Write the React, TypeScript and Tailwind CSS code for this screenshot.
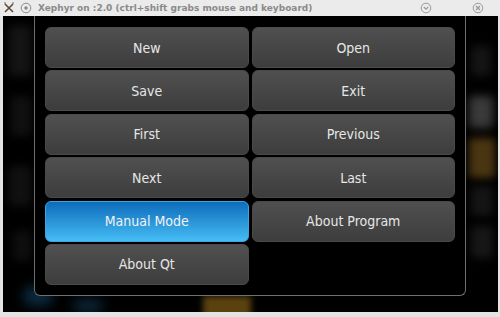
import React from "react";

const buttons = [
  "New",
  "Open",
  "Save",
  "Exit",
  "First",
  "Previous",
  "Next",
  "Last",
  "Manual Mode",
  "About Program",
  "About Qt",
];

function Blob({ c }: { c: string }) {
  return <div className={c} />;
}

export default function App() {
  return (
    <div
      className="w-[500px] h-[317px] bg-[#e4e4e4] flex flex-col overflow-hidden"
      style={{ fontFamily: "'DejaVu Sans Condensed', Roboto, sans-serif" }}
    >
      {/* title bar */}
      <div className="h-[16px] flex items-center bg-[#ebebeb] relative">
        <svg width="12" height="12" viewBox="0 0 12 12" className="ml-[3px]">
          <path d="M2 2 L10 10 M10 2 L2 10" stroke="#5a4a3a" strokeWidth="1.6" />
          <path d="M1 1 L3 1 M9 1 L11 1" stroke="#8a6a4a" strokeWidth="1" />
        </svg>
        <svg width="12" height="12" viewBox="0 0 12 12" className="ml-[5px]">
          <circle cx="6" cy="6" r="4.8" fill="none" stroke="#8c8c8c" strokeWidth="1" />
          <circle cx="6" cy="6" r="1.8" fill="#8c8c8c" />
        </svg>
        <span
          className="ml-[6px] text-[9px] font-bold text-[#8a8a8a] leading-none whitespace-nowrap"
          style={{ fontFamily: "'DejaVu Sans', sans-serif" }}
        >
          Xephyr on :2.0 (ctrl+shift grabs mouse and keyboard)
        </span>
        <div className="flex-1" />
        <svg width="12" height="12" viewBox="0 0 12 12" className="mr-[40px]">
          <circle cx="6" cy="6" r="4.8" fill="none" stroke="#9a9a9a" strokeWidth="1" />
          <path d="M3.8 5 L6 7.2 L8.2 5" fill="none" stroke="#9a9a9a" strokeWidth="1.2" />
        </svg>
        <svg width="12" height="12" viewBox="0 0 12 12" className="mr-[16px]">
          <circle cx="6" cy="6" r="4.8" fill="none" stroke="#9a9a9a" strokeWidth="1" />
          <path d="M4 4 L8 8 M8 4 L4 8" stroke="#9a9a9a" strokeWidth="1.3" />
        </svg>
      </div>

      {/* screen */}
      <div className="h-[296px] ml-[3px] mr-[2px] bg-black relative overflow-hidden">
        {/* blurred background */}
        <Blob c="absolute left-[6px] top-[10px] w-[22px] h-[50px] rounded bg-[#141414] blur-[4px]" />
        <Blob c="absolute left-[8px] top-[80px] w-[20px] h-[40px] rounded bg-[#101010] blur-[4px]" />
        <Blob c="absolute left-[6px] top-[150px] w-[22px] h-[40px] rounded bg-[#101010] blur-[4px]" />
        <Blob c="absolute left-[10px] top-[215px] w-[18px] h-[30px] rounded bg-[#0e0e0e] blur-[4px]" />
        <Blob c="absolute left-[20px] top-[270px] w-[30px] h-[20px] rounded-full bg-[#0b2a3e] blur-[6px]" />
        <Blob c="absolute left-[70px] top-[282px] w-[30px] h-[16px] rounded-full bg-[#0a2233] blur-[6px]" />
        <Blob c="absolute left-[200px] top-[280px] w-[48px] h-[24px] bg-[#5a4210] blur-[3px]" />
        <Blob c="absolute left-[468px] top-[30px] w-[20px] h-[30px] rounded bg-[#141414] blur-[4px]" />
        <Blob c="absolute left-[466px] top-[80px] w-[24px] h-[32px] rounded bg-[#3a3a3a] blur-[5px]" />
        <Blob c="absolute left-[466px] top-[122px] w-[26px] h-[40px] rounded bg-[#4a3512] blur-[4px]" />
        <Blob c="absolute left-[468px] top-[170px] w-[22px] h-[30px] rounded bg-[#141414] blur-[4px]" />
        <Blob c="absolute left-[468px] top-[210px] w-[22px] h-[32px] rounded bg-[#161616] blur-[4px]" />

        {/* dialog panel */}
        <div className="relative ml-[31px] w-[432px] mt-[-10px] pt-[21px] px-[10px] pb-[10px] border border-t-0 border-[#6e6e6e] rounded-b-[6px] bg-black">
          <div className="grid grid-cols-2 gap-x-[3px] gap-y-[2.4px]">
            {buttons.map((b) => {
              const active = b === "Manual Mode";
              return (
                <div
                  key={b}
                  className={
                    active
                      ? "h-[41px] pt-[1px] rounded-[6px] flex items-center justify-center text-[14px] text-[#f2f2f2] bg-gradient-to-b from-[#0c6cbb] to-[#46bdf4] border border-[#3aa6e6]"
                      : "h-[41px] pt-[1px] rounded-[6px] flex items-center justify-center text-[14px] text-[#e6e6e6] bg-gradient-to-b from-[#505050] to-[#3d3d3d] border border-[#4a4a4a]"
                  }
                >
                  {b}
                </div>
              );
            })}
          </div>
        </div>
      </div>
    </div>
  );
}
